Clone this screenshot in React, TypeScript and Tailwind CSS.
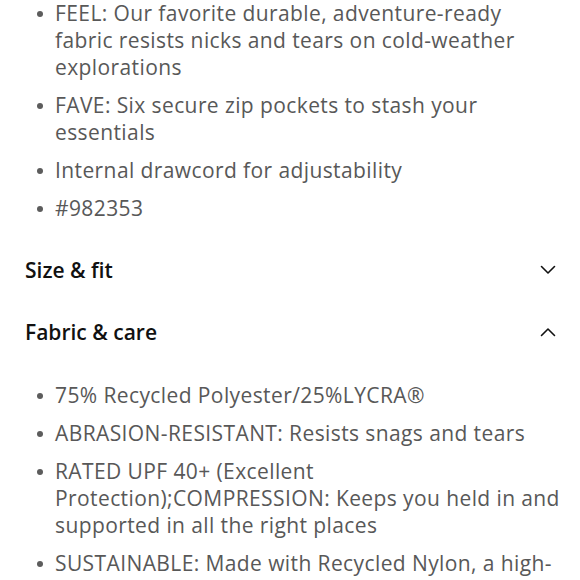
const details = [
  'FEEL: Our favorite durable, adventure-ready fabric resists nicks and tears on cold-weather explorations',
  'FAVE: Six secure zip pockets to stash your essentials',
  'Internal drawcord for adjustability',
  '#982353',
];

const fabric = [
  '75% Recycled Polyester/25%LYCRA®',
  'ABRASION-RESISTANT: Resists snags and tears',
  'RATED UPF 40+ (Excellent Protection);COMPRESSION: Keeps you held in and supported in all the right places',
  'SUSTAINABLE: Made with Recycled Nylon, a high-performance fabric',
];

function Chevron({ up }: { up?: boolean }) {
  return (
    <svg width="16" height="10" viewBox="0 0 16 10" fill="none" className="shrink-0">
      <path
        d={up ? 'M1.5 8.5 L8 2 L14.5 8.5' : 'M1.5 1.5 L8 8 L14.5 1.5'}
        stroke="#111"
        strokeWidth="1.6"
        strokeLinecap="round"
        strokeLinejoin="round"
      />
    </svg>
  );
}

function BulletList({ items }: { items: string[] }) {
  return (
    <ul className="flex flex-col gap-[11px]">
      {items.map((t) => (
        <li key={t} className="flex">
          <span className="w-[30px] shrink-0 flex justify-center pt-[11px]">
            <span className="block w-[6px] h-[6px] rounded-full bg-[#5c5c5c]" />
          </span>
          <span className="flex-1">{t}</span>
        </li>
      ))}
    </ul>
  );
}

export default function App() {
  return (
    <div
      className="w-[580px] h-[580px] overflow-hidden bg-white pl-[25px] pr-[18px] text-[21px] leading-[27px] tracking-[0.4px] text-[#585858]"
      style={{ fontFamily: '"Open Sans", sans-serif' }}
    >
      <BulletList items={details} />

      <div className="mt-[34px] pr-[6px] flex items-center justify-between h-[28px] text-[21px] tracking-normal font-semibold text-[#111]">
        <span>Size &amp; fit</span>
        <Chevron />
      </div>
      <div className="mt-[34px] pr-[6px] flex items-center justify-between h-[28px] text-[21px] tracking-normal font-semibold text-[#111]">
        <span>Fabric &amp; care</span>
        <Chevron up />
      </div>

      <div className="mt-[36px]">
        <BulletList items={fabric} />
      </div>
    </div>
  );
}
